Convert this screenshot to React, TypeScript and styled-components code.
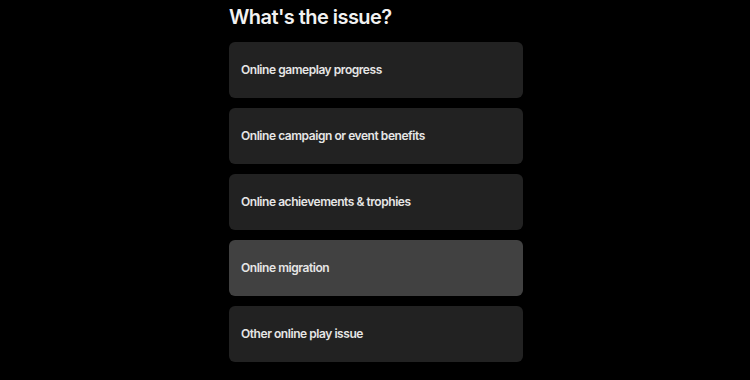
import React from "react";
import styled, { createGlobalStyle } from "styled-components";

const Global = createGlobalStyle`
  html, body { margin: 0; padding: 0; background: #000; }
  body { font-family: Inter, "Noto Sans", sans-serif; }
`;

const Page = styled.div`
  width: 750px;
  height: 380px;
  background: #000;
  display: flex;
  justify-content: center;
  box-sizing: border-box;
  padding-left: 2px;
`;

const Column = styled.div`
  width: 294px;
  display: flex;
  flex-direction: column;
`;

const Title = styled.h2`
  margin: 0;
  padding-top: 5px;
  height: 42px;
  box-sizing: border-box;
  color: #f2f2f2;
  font-size: 20px;
  font-weight: 600;
  letter-spacing: -0.55px;
  line-height: 24px;
`;

const List = styled.div`
  display: flex;
  flex-direction: column;
  gap: 10px;
`;

const Option = styled.button<{ $active?: boolean }>`
  height: 56px;
  border: none;
  border-radius: 6px;
  background: ${(p) => (p.$active ? "#414141" : "#222222")};
  color: #e6e6e6;
  font-family: Inter, "Noto Sans", sans-serif;
  font-size: 12px;
  font-weight: 600;
  letter-spacing: -0.45px;
  text-align: left;
  padding: 0 12px 2px;
  cursor: pointer;
`;

const items = [
  "Online gameplay progress",
  "Online campaign or event benefits",
  "Online achievements & trophies",
  "Online migration",
  "Other online play issue",
];

export default function App() {
  return (
    <>
      <Global />
      <Page>
        <Column>
          <Title>What's the issue?</Title>
          <List>
            {items.map((t) => (
              <Option key={t} $active={t === "Online migration"}>
                {t}
              </Option>
            ))}
          </List>
        </Column>
      </Page>
    </>
  );
}
